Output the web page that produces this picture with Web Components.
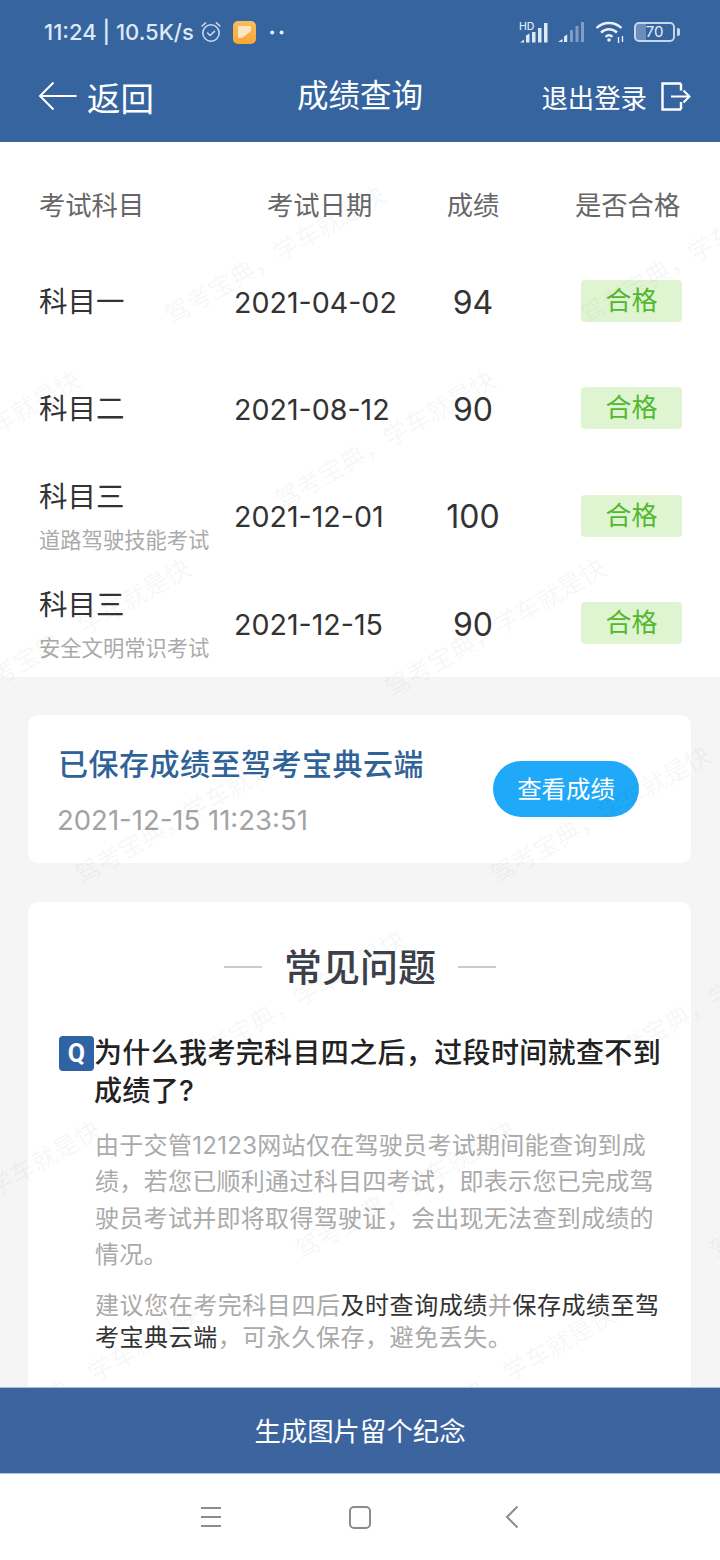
<!DOCTYPE html>
<html lang="zh-CN">
<head>
<meta charset="utf-8">
<title>成绩查询</title>
<style>
  html, body { margin: 0; padding: 0; }
  body {
    width: 720px; height: 1560px; overflow: hidden;
    display: flex; flex-direction: column; position: relative;
    background: #f5f5f5; color: #333;
    font-family: Inter, "Noto Sans CJK SC", sans-serif;
  }
  main { flex: 1; min-height: 0; overflow: hidden; }
  /* highlighted words in the answer are only darker, not heavier */
  faq-card b { font-weight: 400; color: #333; }
</style>
</head>
<body>
  <app-header></app-header>
  <main>
    <score-table>
      <score-row date="2021-04-02" score="94"><span slot="subject">科目一</span></score-row>
      <score-row date="2021-08-12" score="90"><span slot="subject">科目二</span></score-row>
      <score-row date="2021-12-01" score="100"><span slot="subject">科目三</span><span slot="sub">道路驾驶技能考试</span></score-row>
      <score-row date="2021-12-15" score="90"><span slot="subject">科目三</span><span slot="sub">安全文明常识考试</span></score-row>
    </score-table>
    <save-card time="2021-12-15 11:23:51">已保存成绩至驾考宝典云端</save-card>
    <faq-card>
      <span slot="question">为什么我考完科目四之后，过段时间就查不到成绩了?</span>
      <p>由于交管12123网站仅在驾驶员考试期间能查询到成绩，若您已顺利通过科目四考试，即表示您已完成驾驶员考试并即将取得驾驶证，会出现无法查到成绩的情况。</p>
      <p class="tip">建议您在考完科目四后<b>及时查询成绩</b>并<b>保存成绩至驾考宝典云端</b>，可永久保存，避免丢失。</p>
    </faq-card>
  </main>
  <water-mark></water-mark>
  <bottom-button>生成图片留个纪念</bottom-button>
  <system-nav></system-nav>

<script>
// shared helper, every element gets an open shadow root from its own template
class Base extends HTMLElement {
  constructor(html) {
    super();
    const template = document.createElement('template');
    template.innerHTML = html;
    this.attachShadow({ mode: 'open' }).appendChild(template.content.cloneNode(true));
  }
}

class AppHeader extends Base {
  constructor() {
    super(`
      <style>
        :host { display: block; background: #36649f; color: #fff; height: 142px; position: relative; z-index: 2; flex: none; }
        .status { height: 62px; display: flex; align-items: center; padding: 2px 40px 0 44px; box-sizing: border-box; color: #dfe9f6; }
        .time { font-size: 22px; font-weight: 500; white-space: nowrap; width: 156px; }
        .left { display: flex; align-items: center; }
        .right { margin-left: auto; display: flex; align-items: center; }
        svg { display: block; }
        .nav { height: 68px; display: grid; grid-template-columns: 1fr auto 1fr; align-items: center; padding: 0 29px; }
        .back { display: flex; align-items: center; font-size: 33.500px; gap: 10px; padding-left: 9px; }
        .title { font-size: 31.500px; line-height: 40px; }
        .logout { display: flex; align-items: center; justify-content: flex-end; gap: 14px; font-size: 26.400px; }
      </style>
      <div class="status">
        <div class="left">
          <span class="time">11:24 | 10.5K/s</span>
          <svg width="22" height="24" viewBox="0 0 22 24" fill="none" stroke="#c9d8ec" stroke-width="1.600" stroke-linecap="round" style="margin-right:11px">
            <circle cx="11" cy="13" r="8.200"/>
            <path d="M7.600 13l2.500 2.500 4.400-4.200"/>
            <path d="M2 6l3.600-3.200M20 6l-3.600-3.200"/>
          </svg>
          <svg width="23" height="23" viewBox="0 0 23 23" style="margin-right:14px">
            <defs><linearGradient id="o" x1="0" y1="0" x2="0" y2="1"><stop offset="0" stop-color="#f7bd62"/><stop offset="1" stop-color="#f9a632"/></linearGradient></defs>
            <rect width="23" height="23" rx="5" fill="url(#o)"/>
            <path d="M5 5h13v5L9 17H5z" fill="#fbe6c2"/>
          </svg>
          <svg width="14" height="5" viewBox="0 0 14 5" fill="#e6eef8"><circle cx="2.200" cy="2.500" r="2"/><circle cx="11.600" cy="2.500" r="2"/></svg>
        </div>
        <div class="right">
          <span style="display:flex;align-items:flex-end;position:relative;margin-right:9px">
            <span style="position:absolute;left:0;top:-1px;font-size:10.500px;line-height:11px;font-weight:500;color:#dfe9f6">HD</span>
            <svg width="29" height="21" viewBox="0 0 29 21" fill="#dfe9f6">
              <path d="M1 20.500l4-3v3zM7 20.500v-7l3.500-2v9zM13 20.500V10h3.500v10.500zM19 20.500V6h3.500v14.500zM25 20.500V1h3.500v19.500z"/>
            </svg>
          </span>
          <svg width="28" height="24" viewBox="0 0 28 24" style="margin-right:10px">
            <path d="M1 22l4.500-3v3zM7 22v-5.500l3.200-2V22z" fill="#dfe9f6"/>
            <g fill="#7f9ec6"><rect x="13" y="10" width="3" height="12"/><rect x="18.500" y="6" width="3" height="16"/><rect x="24" y="2" width="3" height="20"/></g>
          </svg>
          <svg width="30" height="24" viewBox="0 0 30 24" fill="none" stroke="#e8f0fa" stroke-width="2.400" style="margin-right:9px">
            <path d="M1.500 8C8.500 1.300 19.500 1.300 26.500 8"/>
            <path d="M6 12.500c4.800-4.400 11.200-4.400 16 0"/>
            <path d="M10.500 16.800c2.200-1.900 4.800-1.900 7 0"/>
            <circle cx="14" cy="20" r="1.800" fill="#e8f0fa" stroke="none"/>
            <path d="M23.500 17v6M27.500 16v6" stroke-width="1.400"/>
          </svg>
          <span style="display:flex;align-items:center">
            <span style="box-sizing:border-box;width:41px;height:20px;border:2px solid #c5d5ea;border-radius:5px;position:relative;font-size:15px;line-height:16px;text-align:center;color:#e6eef8;background:linear-gradient(90deg,#6b8dbb 0 26%,transparent 26%)">70</span>
            <span style="width:3px;height:8px;background:#c5d5ea;margin-left:2px;border-radius:0 2px 2px 0"></span>
          </span>
        </div>
      </div>
      <div class="nav">
        <div class="back">
          <svg width="39" height="30" viewBox="0 0 39 30" fill="none" stroke="#fff" stroke-width="2"><path d="M38.500 15H2M15.500 1.500L2 15l13.500 13.500"/></svg>
          <span>返回</span>
        </div>
        <div class="title">成绩查询</div>
        <div class="logout">
          <span>退出登录</span>
          <svg width="30" height="29" viewBox="0 0 30 29" fill="none" stroke="#fff" stroke-width="2.400"><path d="M20 1.500H1.500v26H20M20 1.500v7M20 20v7.500"/><path d="M10 14.500h18.500M22.500 8.500l6 6-6 6" stroke-width="2"/></svg>
        </div>
      </div>
    `);
  }
}

class ScoreTable extends Base {
  constructor() {
    super(`
      <style>
        :host { display: block; background: #fff; padding-top: 36px; height: 535px; box-sizing: border-box; overflow: hidden; }
        .head { display: grid; grid-template-columns: 196px 170px 136px 1fr; padding-left: 39px; height: 50px; align-items: center; margin-bottom: 20.500px; font-size: 26.300px; color: #666; }
        .date { padding-left: 32px; }
        .score { text-align: center; }
        .ok { padding-left: 34px; }
      </style>
      <div class="head">
        <span>考试科目</span><span class="date">考试日期</span><span class="score">成绩</span><span class="ok">是否合格</span>
      </div>
      <slot></slot>
    `);
  }
}

class ScoreRow extends Base {
  constructor() {
    super(`
      <style>
        :host { display: grid; grid-template-columns: 195px 171px 136px 1fr; padding-left: 39px; height: 107.300px; align-items: center; }
        .subject { font-size: 28.500px; line-height: 36px; color: #333; display: block; }
        .sub { font-size: 21.300px; line-height: 28px; color: #aaa; display: block; margin-top: 11px; }
        .date { font-size: 28.600px; color: #333; white-space: nowrap; }
        .score { font-size: 32px; color: #333; text-align: center; }
        .badge { width: 101px; height: 42px; margin: -2px 0 0 40px; border-radius: 4px; background: #dff5d2; color: #52b82e; font-size: 26px; line-height: 42px; text-align: center; }
      </style>
      <div>
        <slot class="subject" name="subject"></slot>
        <div class="sub" id="sub"><slot name="sub"></slot></div>
      </div>
      <div class="date" id="date"></div>
      <div class="score" id="score"></div>
      <div class="badge">合格</div>
    `);
  }
  connectedCallback() {
    this.shadowRoot.getElementById('date').textContent = this.getAttribute('date');
    this.shadowRoot.getElementById('score').textContent = this.getAttribute('score');
    if (!this.querySelector('[slot=sub]')) this.shadowRoot.getElementById('sub').style.display = 'none';
  }
}

class SaveCard extends Base {
  constructor() {
    super(`
      <style>
        :host { display: flex; align-items: center; justify-content: space-between; box-sizing: border-box; width: 663px; height: 148px; margin: 38px 0 39px 28px; padding: 0 52px 0 30px; background: #fff; border-radius: 10px; }
        .text { padding-top: 3px; }
        .title { font-size: 30px; line-height: 40px; font-weight: 500; color: #2f6299; letter-spacing: 0.500px; white-space: nowrap; }
        .time { font-size: 27.500px; line-height: 36px; margin-top: 18px; margin-left: -1px; color: #a3a3a3; }
        .btn { width: 146px; height: 56px; border-radius: 28px; background: #1fa9f8; color: #fff; font-size: 24.400px; line-height: 56px; text-align: center; }
      </style>
      <div class="text">
        <div class="title"><slot></slot></div>
        <div class="time" id="time"></div>
      </div>
      <div class="btn">查看成绩</div>
    `);
  }
  connectedCallback() {
    this.shadowRoot.getElementById('time').textContent = this.getAttribute('time');
  }
}

class FaqCard extends Base {
  constructor() {
    super(`
      <style>
        :host { display: block; box-sizing: border-box; width: 663px; height: 600px; margin-left: 28px; padding: 40px 30px 0 31px; background: #fff; border-radius: 10px; }
        .title { display: flex; align-items: center; justify-content: center; gap: 22px; font-size: 38px; line-height: 50px; font-weight: 500; color: #3c4048; }
        .title i { width: 38px; height: 2px; background: #ccc; }
        .q { display: flex; margin-top: 42px; font-size: 28px; line-height: 38px; font-weight: 500; color: #222; letter-spacing: 0.350px; }
        .mark { flex: none; width: 35px; height: 35px; margin-top: 2px; border-radius: 4px; background: #2f63a3; color: #fff; font: 700 25px/35px Roboto, sans-serif; text-align: center; }
        .a { padding-left: 36px; margin-top: 18px; width: 568px; }
        ::slotted(p) { margin: 0 0 16px; font-size: 24px; line-height: 36.400px; color: #aaa; letter-spacing: 0.300px; }
        ::slotted(p.tip) { line-height: 32.500px; letter-spacing: 0.550px; }
      </style>
      <div class="title"><i></i><span>常见问题</span><i></i></div>
      <div class="q"><span class="mark">Q</span><span><slot name="question"></slot></span></div>
      <div class="a"><slot></slot></div>
    `);
  }
}

// diagonal watermark lying over the scroll area, the places are the content here
class WaterMark extends Base {
  constructor() {
    super(`
      <style>
        :host { position: absolute; left: 0; top: 142px; width: 720px; height: 1245px; overflow: hidden; pointer-events: none; z-index: 1; }
        span { position: absolute; width: 300px; height: 30px; margin: -15px 0 0 -150px; font-size: 25px; line-height: 30px; text-align: center; white-space: nowrap; color: rgba(0, 0, 0, 0.05); transform: rotate(-30deg); }
      </style>
    `);
    const spots = [[275,255],[690,255],[385,440],[-30,440],[495,628],[80,628],[600,815],[185,815],[710,1000],[295,1000],[-120,1000],[405,1190],[-10,1190],[820,1190],[505,1375],[90,1375]];
    for (const [x, y] of spots) {
      const s = document.createElement('span');
      s.textContent = '驾考宝典，学车就是快';
      s.style.left = x + 'px';
      s.style.top = (y - 142) + 'px';
      this.shadowRoot.appendChild(s);
    }
  }
}

class BottomButton extends Base {
  constructor() {
    super(`
      <style>
        :host { display: block; flex: none; box-sizing: border-box; height: 87px; background: #3c659f; border-top: 1px solid #a9c0dc; border-bottom: 1px solid #a9c0dc; color: #fff; font-size: 26.400px; line-height: 87px; text-align: center; position: relative; z-index: 2; }
      </style>
      <slot></slot>
    `);
  }
}

class SystemNav extends Base {
  constructor() {
    super(`
      <style>
        :host { display: flex; flex: none; height: 86px; background: #fff; align-items: center; position: relative; z-index: 2; padding-left: 200px; box-sizing: border-box; }
        svg { display: block; }
      </style>
      <svg width="23" height="22" viewBox="0 0 23 22" stroke="#8c8c8c" stroke-width="2" style="margin-right:126px"><path d="M1 2h20M1 11h20M1 20h20"/></svg>
      <svg width="22" height="23" viewBox="0 0 22 23" fill="none" stroke="#8c8c8c" stroke-width="2" style="margin-right:134px"><rect x="1" y="1" width="20" height="21" rx="4"/></svg>
      <svg width="14" height="24" viewBox="0 0 14 24" fill="none" stroke="#8c8c8c" stroke-width="2"><path d="M12.500 1.500L2 12l10.500 10.500"/></svg>
    `);
  }
}

customElements.define('app-header', AppHeader);
customElements.define('score-table', ScoreTable);
customElements.define('score-row', ScoreRow);
customElements.define('save-card', SaveCard);
customElements.define('faq-card', FaqCard);
customElements.define('water-mark', WaterMark);
customElements.define('bottom-button', BottomButton);
customElements.define('system-nav', SystemNav);
</script>
</body>
</html>
